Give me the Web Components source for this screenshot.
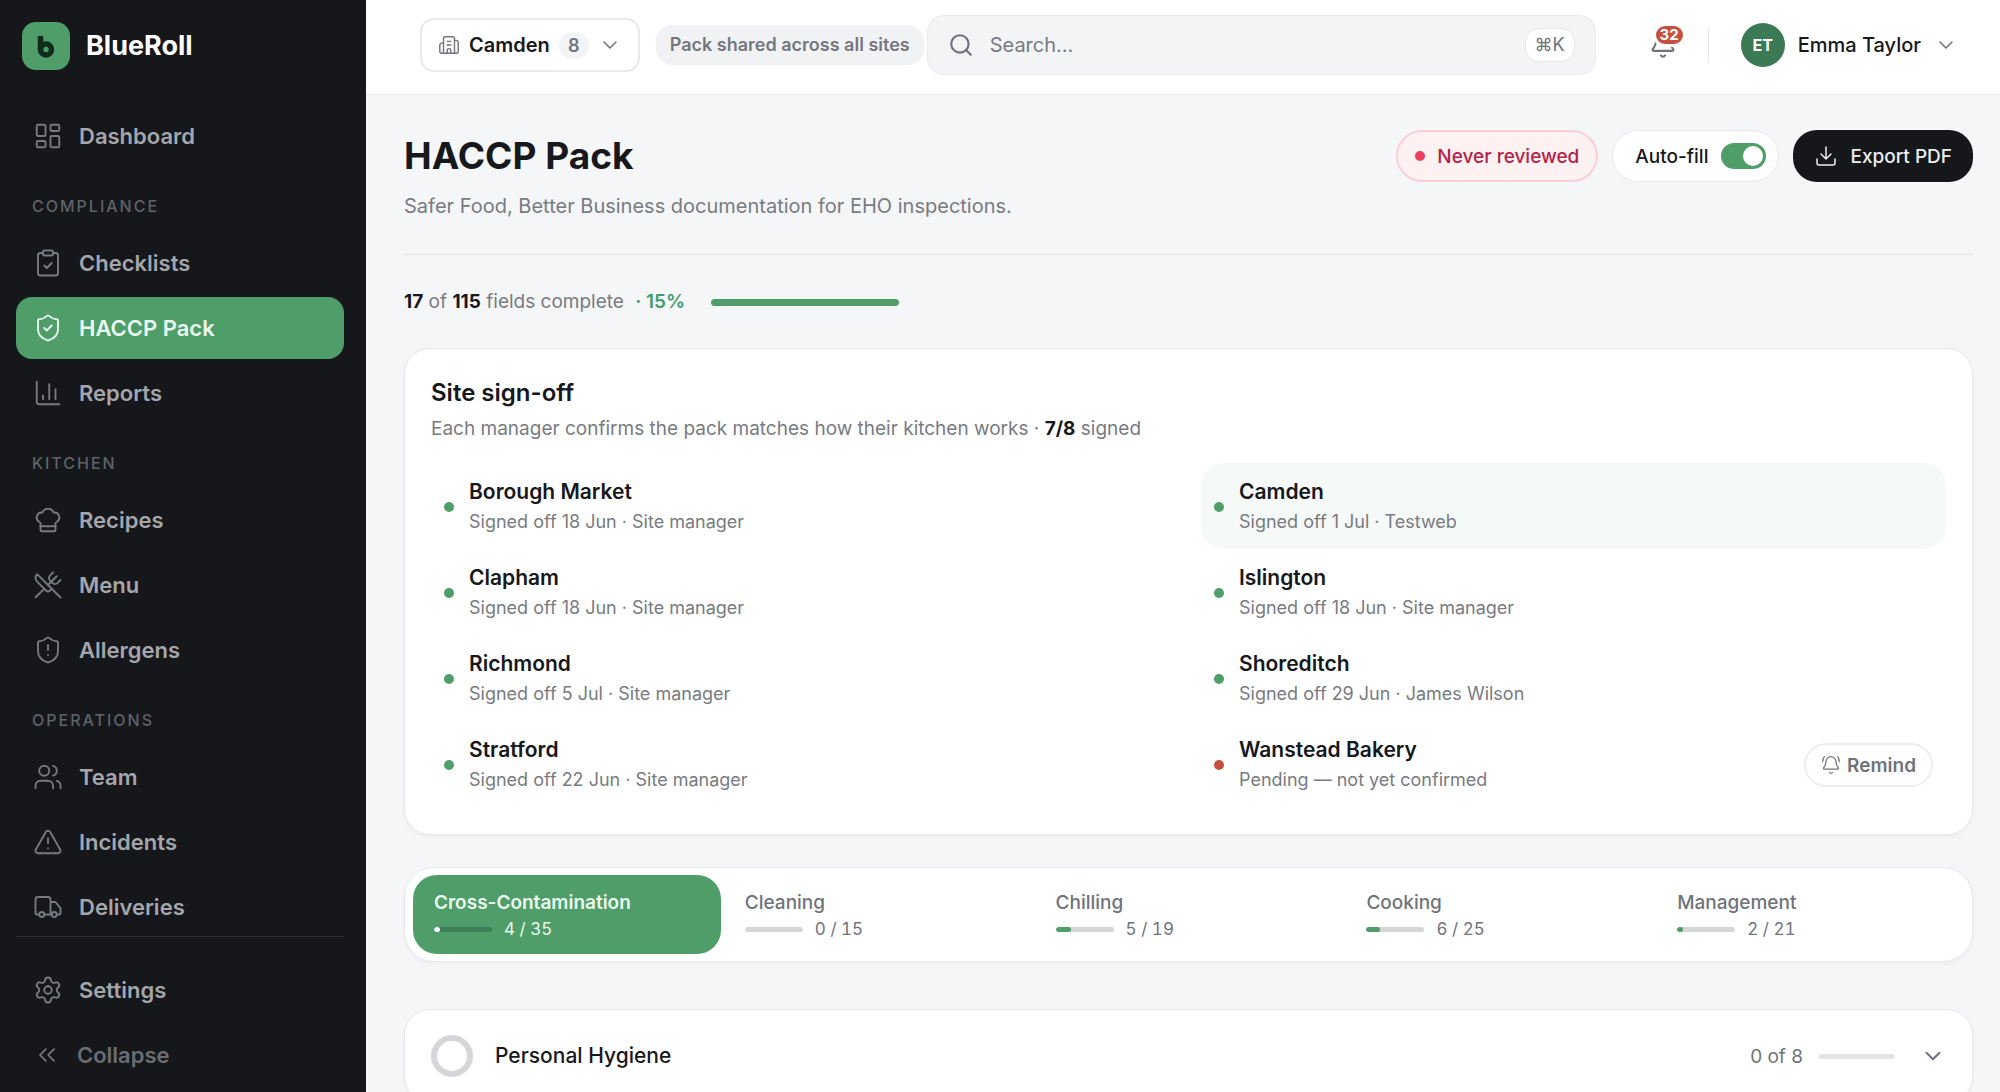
<!DOCTYPE html>
<html lang="en">
<head>
<meta charset="utf-8">
<title>HACCP Pack · BlueRoll</title>
<style>
  :root {
    --ink: #17181c;
    --muted: #787b82;
    --soft: #70737b;
    --line: #e8e9ec;
    --green: #4f9d69;
    --red: #c5503f;
    --night: #15171b;
    --canvas: #f5f6f8;
  }
  html, body { margin: 0; height: 100%; }
  body {
    font-family: Inter, "Liberation Sans", sans-serif;
    font-size: 19px;
    color: var(--ink);
    background: var(--canvas);
    overflow: hidden;
  }
</style>
</head>
<body>
<app-shell>
  <side-bar slot="side">
    <nav-item icon="dashboard">Dashboard</nav-item>
    <nav-group label="Compliance">
      <nav-item icon="clipboard">Checklists</nav-item>
      <nav-item icon="shield-check" active>HACCP Pack</nav-item>
      <nav-item icon="chart">Reports</nav-item>
    </nav-group>
    <nav-group label="Kitchen">
      <nav-item icon="chef">Recipes</nav-item>
      <nav-item icon="utensils">Menu</nav-item>
      <nav-item icon="shield-alert">Allergens</nav-item>
    </nav-group>
    <nav-group label="Operations">
      <nav-item icon="users">Team</nav-item>
      <nav-item icon="alert">Incidents</nav-item>
      <nav-item icon="truck">Deliveries</nav-item>
    </nav-group>
    <nav-item slot="foot" icon="gear">Settings</nav-item>
    <collapse-button slot="foot">Collapse</collapse-button>
  </side-bar>

  <top-bar slot="top">
    <site-picker slot="start" count="8">Camden</site-picker>
    <info-chip slot="start">Pack shared across all sites</info-chip>
    <search-box shortcut="⌘K"></search-box>
    <bell-button slot="end" count="32"></bell-button>
    <user-menu slot="end" initials="ET">Emma Taylor</user-menu>
  </top-bar>

  <page-heading>
    HACCP Pack
    <span slot="sub">Safer Food, Better Business documentation for EHO inspections.</span>
    <status-pill slot="actions">Never reviewed</status-pill>
    <toggle-pill slot="actions">Auto-fill</toggle-pill>
    <export-button slot="actions">Export PDF</export-button>
  </page-heading>
  <pack-progress done="17" total="115" percent="15"></pack-progress>
  <sign-off-card signed="7/8">
    <site-row name="Borough Market">Signed off 18 Jun · Site manager</site-row>
    <site-row name="Camden" current>Signed off 1 Jul · Testweb</site-row>
    <site-row name="Clapham">Signed off 18 Jun · Site manager</site-row>
    <site-row name="Islington">Signed off 18 Jun · Site manager</site-row>
    <site-row name="Richmond">Signed off 5 Jul · Site manager</site-row>
    <site-row name="Shoreditch">Signed off 29 Jun · James Wilson</site-row>
    <site-row name="Stratford">Signed off 22 Jun · Site manager</site-row>
    <site-row name="Wanstead Bakery" pending>Pending — not yet confirmed</site-row>
  </sign-off-card>
  <tab-strip>
    <pack-tab done="4" total="35" active>Cross-Contamination</pack-tab>
    <pack-tab done="0" total="15">Cleaning</pack-tab>
    <pack-tab done="5" total="19">Chilling</pack-tab>
    <pack-tab done="6" total="25">Cooking</pack-tab>
    <pack-tab done="2" total="21">Management</pack-tab>
  </tab-strip>
  <section-card done="0" total="8">Personal Hygiene</section-card>
</app-shell>

<script>
const ICONS = {
  'dashboard': '<rect width="7" height="9" x="3" y="3" rx="1"/><rect width="7" height="5" x="14" y="3" rx="1"/><rect width="7" height="9" x="14" y="12" rx="1"/><rect width="7" height="5" x="3" y="16" rx="1"/>',
  'clipboard': '<rect width="8" height="4" x="8" y="2" rx="1"/><path d="M16 4h2a2 2 0 0 1 2 2v14a2 2 0 0 1-2 2H6a2 2 0 0 1-2-2V6a2 2 0 0 1 2-2h2"/><path d="m9 14 2 2 4-4"/>',
  'shield-check': '<path d="M20 13c0 5-3.5 7.5-7.66 8.95a1 1 0 0 1-.67-.01C7.5 20.5 4 18 4 13V6a1 1 0 0 1 1-1c2 0 4.500-1.200 6.240-2.720a1.170 1.170 0 0 1 1.520 0C14.510 3.810 17 5 19 5a1 1 0 0 1 1 1z"/><path d="m9 12 2 2 4-4"/>',
  'shield-alert': '<path d="M20 13c0 5-3.500 7.500-7.660 8.950a1 1 0 0 1-.67-.01C7.500 20.500 4 18 4 13V6a1 1 0 0 1 1-1c2 0 4.500-1.200 6.240-2.720a1.170 1.170 0 0 1 1.520 0C14.510 3.810 17 5 19 5a1 1 0 0 1 1 1z"/><path d="M12 8v4M12 16h.01"/>',
  'chart': '<path d="M3 3v16a2 2 0 0 0 2 2h16M18 17V9M13 17V5M8 17v-3"/>',
  'chef': '<path d="M17 21a1 1 0 0 0 1-1v-5.350c0-.457.316-.844.727-1.041a4 4 0 0 0-2.134-7.589 5 5 0 0 0-9.186 0 4 4 0 0 0-2.134 7.588c.411.198.727.585.727 1.041V20a1 1 0 0 0 1 1Z"/><path d="M6 17h12"/>',
  'utensils': '<path d="m16 2-2.300 2.300a3 3 0 0 0 0 4.200l1.800 1.800a3 3 0 0 0 4.200 0L22 8"/><path d="M15 15 3.300 3.300a4.200 4.200 0 0 0 0 6l7.300 7.300c.7.7 2 .7 2.800 0L15 15Zm0 0 7 7"/><path d="m2.100 21.800 6.400-6.300M19 5l-7 7"/>',
  'users': '<path d="M16 21v-2a4 4 0 0 0-4-4H6a4 4 0 0 0-4 4v2"/><circle cx="9" cy="7" r="4"/><path d="M22 21v-2a4 4 0 0 0-3-3.870M16 3.130a4 4 0 0 1 0 7.750"/>',
  'alert': '<path d="m21.730 18-8-14a2 2 0 0 0-3.480 0l-8 14A2 2 0 0 0 4 21h16a2 2 0 0 0 1.730-3"/><path d="M12 9v4M12 17h.01"/>',
  'truck': '<path d="M14 18V6a2 2 0 0 0-2-2H4a2 2 0 0 0-2 2v11a1 1 0 0 0 1 1h2M15 18H9M19 18h2a1 1 0 0 0 1-1v-3.650a1 1 0 0 0-.22-.624l-3.480-4.350A1 1 0 0 0 17.520 8H14"/><circle cx="17" cy="18" r="2"/><circle cx="7" cy="18" r="2"/>',
  'gear': '<path d="M9.671 4.136a2.340 2.340 0 0 1 4.659 0 2.340 2.340 0 0 0 3.319 1.915 2.340 2.340 0 0 1 2.330 4.033 2.340 2.340 0 0 0 0 3.831 2.340 2.340 0 0 1-2.330 4.033 2.340 2.340 0 0 0-3.319 1.915 2.340 2.340 0 0 1-4.659 0 2.340 2.340 0 0 0-3.320-1.915 2.340 2.340 0 0 1-2.330-4.033 2.340 2.340 0 0 0 0-3.831A2.340 2.340 0 0 1 6.350 6.051a2.340 2.340 0 0 0 3.319-1.915"/><circle cx="12" cy="12" r="3"/>',
  'collapse': '<path d="m11 17-5-5 5-5M18 17l-5-5 5-5"/>',
  'building': '<path d="M10 12h4M10 8h4M14 21v-3a2 2 0 0 0-4 0v3"/><path d="M6 10H4a2 2 0 0 0-2 2v7a2 2 0 0 0 2 2h16a2 2 0 0 0 2-2V9a2 2 0 0 0-2-2h-2"/><path d="M6 21V5a2 2 0 0 1 2-2h8a2 2 0 0 1 2 2v16"/>',
  'chevron': '<path d="m6 9 6 6 6-6"/>',
  'search': '<circle cx="11" cy="11" r="8"/><path d="m21 21-4.300-4.300"/>',
  'bell': '<path d="M10.268 21a2 2 0 0 0 3.464 0M3.262 15.326A1 1 0 0 0 4 17h16a1 1 0 0 0 .74-1.673C19.410 13.956 18 12.499 18 8A6 6 0 0 0 6 8c0 4.499-1.411 5.956-2.738 7.326"/>',
  'bell-ring': '<path d="M10.268 21a2 2 0 0 0 3.464 0M22 8c0-2.300-.8-4.300-2-6M3.262 15.326A1 1 0 0 0 4 17h16a1 1 0 0 0 .74-1.673C19.410 13.956 18 12.499 18 8A6 6 0 0 0 6 8c0 4.499-1.411 5.956-2.738 7.326M4 2C2.800 3.700 2 5.700 2 8"/>',
  'download': '<path d="M12 3v12M7 10l5 5 5-5M21 15v4a2 2 0 0 1-2 2H5a2 2 0 0 1-2-2v-4"/>'
};

const RESET = `
  *, *::before, *::after { box-sizing: border-box; }
  :host { box-sizing: border-box; }
  :host([hidden]) { display: none; }
  button, input { font: inherit; color: inherit; margin: 0; padding: 0; border: 0; background: none; }
  button { cursor: pointer; text-align: left; }
  a { color: inherit; text-decoration: none; }
`;

/* Registers an element whose shadow root is built from its attributes. */
function define(tag, css, html) {
  customElements.define(tag, class extends HTMLElement {
    connectedCallback() {
      if (this.shadowRoot) return;
      const root = this.attachShadow({ mode: 'open' });
      const body = typeof html === 'function' ? html(name => this.getAttribute(name), this) : html;
      root.innerHTML = `<style>${RESET}${css}</style>${body}`;
    }
  });
}

define('ui-icon', `
  :host { display: block; flex: none; width: var(--size, 24px); height: var(--size, 24px); }
  svg { display: block; width: 100%; height: 100%; fill: none; stroke: currentColor;
        stroke-width: var(--stroke, 1.5); stroke-linecap: round; stroke-linejoin: round; }
`, get => `<svg viewBox="0 0 24 24" aria-hidden="true">${ICONS[get('name')] || ''}</svg>`);

define('ui-meter', `
  :host { display: block; flex: none; height: 5px; border-radius: 3px; overflow: hidden; background: var(--track, #d5d6d9); }
  div { height: 100%; border-radius: 3px; background: var(--fill, var(--green)); }
`, get => `<div role="progressbar" aria-label="Progress" aria-valuenow="${get('value')}" style="width:${get('value')}%"></div>`);

define('app-shell', `
  :host { display: flex; height: 100vh; }
  .col { flex: 1; min-width: 0; display: flex; flex-direction: column; }
  main { flex: 1; min-height: 0; overflow-y: auto; scrollbar-width: none;
         padding: 35px 27px 0 38px; }
`, `<slot name="side"></slot><div class="col"><slot name="top"></slot><main><slot></slot></main></div>`);

define('side-bar', `
  :host { display: flex; flex-direction: column; flex: none; width: 366px; padding: 0 22px 6px 16px;
          background: var(--night); color: #a4a6ab; }
  .brand { display: flex; align-items: center; gap: 16px; padding: 22px 6px 35px; color: #fff;
           font-size: 27px; font-weight: 700; line-height: 48px; }
  .brand svg { display: block; width: 48px; height: 48px; }
  nav { flex: 1; min-height: 0; overflow: hidden; display: flex; flex-direction: column; }
  footer { display: flex; flex-direction: column; gap: 3px; padding-top: 22px; border-top: 1px solid #2a2c31; }
`, `
  <div class="brand">
    <svg viewBox="0 0 48 48" aria-hidden="true">
      <rect width="48" height="48" rx="14" fill="#4f9d69"/>
      <circle cx="24" cy="27.500" r="5.500" fill="none" stroke="#0f2b1b" stroke-width="5.500"/>
      <path d="M18.500 14v14" fill="none" stroke="#0f2b1b" stroke-width="5.500"/>
    </svg>
    <span>BlueRoll</span>
  </div>
  <nav aria-label="Main"><slot></slot></nav>
  <footer><slot name="foot"></slot></footer>
`);

define('nav-group', `
  :host { display: flex; flex-direction: column; gap: 3px; flex: none; }
  h2 { margin: 0; padding: 29px 16px 13px; font-size: 16px; line-height: 20px; font-weight: 500;
       letter-spacing: 2px; text-transform: uppercase; color: #5f6269; }
`, get => `<h2>${get('label')}</h2><slot></slot>`);

const NAV_ROW = `
  :host { display: block; flex: none; }
  .row { display: flex; align-items: center; gap: 16px; width: 100%; height: 62px; padding: 0 17px; border-radius: 16px;
         font-size: 22px; font-weight: 600; line-height: 30px; }
  ui-icon { --size: 30px; color: #777a81; }
`;
define('nav-item', `${NAV_ROW}
  :host([active]) .row { background: var(--green); color: #e9fbee; }
  :host([active]) ui-icon { color: #e9fbee; }
`, (get, el) => `<a class="row" href="#"${el.hasAttribute('active') ? ' aria-current="page"' : ''}><ui-icon name="${get('icon')}"></ui-icon><slot></slot></a>`);

define('collapse-button', `${NAV_ROW}
  .row { color: #6a6d74; }
  ui-icon { --size: 28px; }
`, `<button class="row" type="button"><ui-icon name="collapse"></ui-icon><slot></slot></button>`);

define('top-bar', `
  :host { display: block; flex: none; background: #fff; border-bottom: 1px solid #ebecee; }
  header { display: flex; align-items: center; height: 94px; padding: 0 42px 4px 54px; }
  .start { display: flex; align-items: center; gap: 16px; margin-right: 3px; }
  .end { display: flex; align-items: center; gap: 23px; margin-left: 45px; }
`, `<header><div class="start"><slot name="start"></slot></div><slot></slot><div class="end"><slot name="end"></slot></div></header>`);

define('site-picker', `
  :host { display: block; }
  button { display: flex; align-items: center; gap: 9px; height: 54px; padding: 0 16px; border: 2px solid #e8e9eb;
           border-radius: 14px; font-size: 20px; font-weight: 600; white-space: nowrap; }
  .count { min-width: 30px; padding: 0 8px; border-radius: 14px; background: #f3f4f6; color: var(--soft);
           font-size: 18px; line-height: 27px; text-align: center; }
  ui-icon { color: var(--soft); }
`, get => `<button type="button" aria-haspopup="listbox"><ui-icon name="building" style="--size:22px"></ui-icon><slot></slot><span class="count">${get('count')}</span><ui-icon name="chevron" style="--size:24px"></ui-icon></button>`);

define('info-chip', `
  :host { display: block; padding: 0 14px; border-radius: 16px; background: #f1f2f4; color: #747780;
          font-size: 18px; line-height: 40px; font-weight: 600; white-space: nowrap; }
`, `<slot></slot>`);

define('search-box', `
  :host { display: block; flex: 1; min-width: 0; }
  label { display: flex; align-items: center; gap: 16px; height: 60px; padding: 0 20px; border: 1px solid #e9ebed;
          border-radius: 16px; background: #f3f4f6; }
  ui-icon { --size: 26px; --stroke: 2; color: var(--soft); }
  input { flex: 1; min-width: 0; font-size: 20px; line-height: 30px; outline: 0; }
  input::placeholder { color: var(--muted); opacity: 1; }
  kbd { font: inherit; font-size: 18px; line-height: 32px; padding: 0 9px; border: 1px solid #e6e7ea;
        border-radius: 14px; background: #fff; color: var(--soft); }
`, get => `<label><ui-icon name="search"></ui-icon><input type="search" placeholder="Search…" aria-label="Search"><kbd>${get('shortcut')}</kbd></label>`);

define('bell-button', `
  :host { display: block; }
  button { position: relative; display: flex; align-items: center; justify-content: center; width: 44px; height: 44px; }
  ui-icon { --size: 28px; --stroke: 1.8; color: var(--soft); }
  .count { position: absolute; top: 3px; right: 2px; min-width: 27px; border-radius: 10px; background: var(--red);
           box-shadow: 0 0 0 3px #fff; color: #fff; font-size: 15px; line-height: 18px; font-weight: 700; text-align: center; }
`, get => `<button type="button" aria-label="Notifications"><ui-icon name="bell"></ui-icon><span class="count">${get('count')}</span></button>`);

define('user-menu', `
  :host { display: flex; align-items: center; gap: 32px; }
  :host::before { content: ""; width: 1px; height: 36px; background: var(--line); }
  button { display: flex; align-items: center; gap: 13px; font-size: 20px; font-weight: 500; white-space: nowrap; }
  .avatar { width: 44px; height: 44px; border-radius: 50%; background: #3c7a56; color: #fff; font-size: 16px;
            line-height: 44px; font-weight: 700; text-align: center; }
  ui-icon { --size: 24px; color: var(--soft); }
`, get => `<button type="button" aria-haspopup="menu"><span class="avatar">${get('initials')}</span><slot></slot><ui-icon name="chevron"></ui-icon></button>`);

define('page-heading', `
  :host { display: flex; align-items: flex-start; justify-content: space-between; gap: 24px; padding-bottom: 33px;
          border-bottom: 1px solid #e4e6e9; }
  h1 { margin: 0; font-size: 37px; line-height: 52px; font-weight: 700; }
  p { margin: 9px 0 0; font-size: 20px; line-height: 30px; color: var(--muted); }
  .actions { display: flex; align-items: center; gap: 14px; }
`, `<div><h1><slot></slot></h1><p><slot name="sub"></slot></p></div><div class="actions"><slot name="actions"></slot></div>`);

define('status-pill', `
  :host { display: flex; align-items: center; gap: 12px; height: 52px; padding: 0 17px; border: 2px solid #f9cfd8;
          border-radius: 26px; background: #fef1f1; color: #b51f48; font-weight: 500; white-space: nowrap; }
  :host::before { content: ""; width: 10px; height: 10px; border-radius: 50%; background: #ee3f5f; }
`, `<slot></slot>`);

define('toggle-pill', `
  :host { display: block; }
  label { display: flex; align-items: center; gap: 13px; height: 52px; padding: 0 12px 0 22px; border: 1px solid var(--line);
          border-radius: 26px; background: #fff; font-weight: 500; white-space: nowrap; cursor: pointer; }
  input { appearance: none; display: flex; align-items: center; width: 45px; height: 26px; padding: 0 3px;
          border-radius: 13px; background: #cfd1d5; cursor: pointer; }
  input::before { content: ""; width: 20px; height: 20px; border-radius: 50%; background: #fff; }
  input:checked { justify-content: flex-end; background: var(--green); }
`, `<label for="toggle"><slot></slot><input id="toggle" type="checkbox" role="switch" checked></label>`);

define('export-button', `
  :host { display: block; }
  button { display: flex; align-items: center; gap: 12px; height: 52px; padding: 0 21px; border-radius: 24px;
           background: var(--night); color: #eceef0; font-weight: 500; white-space: nowrap; }
  ui-icon { --size: 24px; }
`, `<button type="button"><ui-icon name="download"></ui-icon><slot></slot></button>`);

define('pack-progress', `
  :host { display: flex; align-items: center; gap: 26px; padding: 32px 0 31px; line-height: 30px; color: var(--muted); }
  b { color: var(--ink); font-weight: 700; }
  .pct { margin-left: 6px; color: #3f9c6b; font-weight: 600; }
  ui-meter { width: 188px; height: 7px; border-radius: 4px; }
`, get => `<div><b>${get('done')}</b> of <b>${get('total')}</b> fields complete <span class="pct">· ${get('percent')}%</span></div><ui-meter value="100"></ui-meter>`);

const CARD = `border: 1px solid var(--line); background: #fff; box-shadow: 0 2px 4px rgba(20, 24, 32, .04);`;

define('sign-off-card', `
  :host { display: block; padding: 27px 26px; border-radius: 26px; ${CARD} }
  h2 { margin: 0; font-size: 24px; line-height: 34px; font-weight: 600; }
  p { margin: 4px 0 0; line-height: 30px; color: var(--muted); }
  b { color: var(--ink); font-weight: 700; }
  .grid { display: grid; grid-template-columns: 1fr 1fr; column-gap: 25px; margin-top: 19px; }
`, get => `<h2>Site sign-off</h2>
  <p>Each manager confirms the pack matches how their kitchen works · <b>${get('signed')}</b> signed</p>
  <div class="grid"><slot></slot></div>`);

define('site-row', `
  :host { display: flex; align-items: center; gap: 15px; padding: 14px 13px 12px; border-radius: 22px; }
  :host([current]) { background: #f5f9f8; }
  .dot { width: 10px; height: 10px; border-radius: 50%; background: var(--green); }
  :host([pending]) .dot { background: var(--red); }
  .text { flex: 1; min-width: 0; line-height: 30px; }
  h3 { margin: 0; font-size: 21px; line-height: 30px; font-weight: 600; }
  p { margin: 0; font-size: 18px; color: var(--muted); }
  button { display: flex; align-items: center; gap: 6px; height: 44px; padding: 0 15px; border: 2px solid #ecedef;
           border-radius: 22px; color: var(--soft); font-weight: 600; }
  ui-icon { --size: 20px; }
`, (get, el) => `<span class="dot"></span><div class="text"><h3>${get('name')}</h3><p><slot></slot></p></div>
  ${el.hasAttribute('pending') ? '<button type="button"><ui-icon name="bell-ring"></ui-icon>Remind</button>' : ''}`);

define('tab-strip', `
  :host { display: grid; grid-auto-flow: column; grid-auto-columns: 1fr; gap: 3px; margin-top: 32px; padding: 7px 8px;
          border-radius: 30px; ${CARD} }
`, `<slot></slot>`);

define('pack-tab', `
  :host { display: block; min-width: 0; }
  button { display: block; width: 100%; padding: 14px 21px 13px; border-radius: 24px; color: var(--soft); }
  .name { display: block; line-height: 28px; font-weight: 500; }
  .state { display: flex; align-items: center; gap: 12px; font-size: 17px; line-height: 24px; font-variant-numeric: tabular-nums; }
  ui-meter { width: 58px; }
  :host([active]) button { background: var(--green); color: #e9fbee; }
  :host([active]) .name { font-weight: 600; }
  :host([active]) ui-meter { --track: #3d7f57; --fill: #fff; }
`, get => `<button type="button"><span class="name"><slot></slot></span>
  <span class="state"><ui-meter value="${Math.round(get('done') / get('total') * 100)}"></ui-meter><span>${get('done')} / ${get('total')}</span></span></button>`);

define('section-card', `
  :host { display: block; margin-top: 47px; border-radius: 26px; ${CARD} }
  button { display: flex; align-items: center; width: 100%; padding: 25px 26px; }
  .ring { width: 42px; height: 42px; border: 6px solid #d5d6d9; border-radius: 50%; }
  .name { flex: 1; margin-left: 22px; font-size: 21px; line-height: 30px; font-weight: 500; }
  .count { color: var(--soft); }
  ui-meter { --track: #e3e4e6; width: 76px; margin: 0 25px 0 16px; }
  ui-icon { --size: 26px; --stroke: 1.8; color: var(--soft); }
`, get => `<button type="button" aria-expanded="false"><span class="ring"></span><span class="name"><slot></slot></span>
  <span class="count">${get('done')} of ${get('total')}</span><ui-meter value="0"></ui-meter><ui-icon name="chevron"></ui-icon></button>`);
</script>
</body>
</html>
